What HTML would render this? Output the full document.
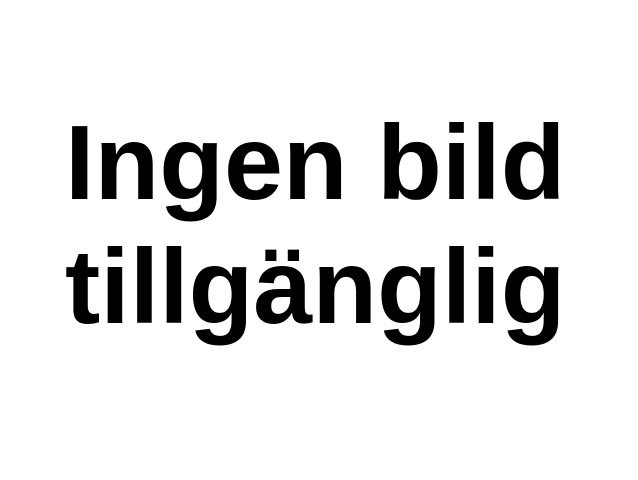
<!DOCTYPE html>
<html><head><meta charset="utf-8"><style>
html,body{margin:0;padding:0;background:#fff;width:638px;height:480px;overflow:hidden;position:relative}
.t{position:absolute;left:65px;font-family:"Liberation Sans",Arial,sans-serif;font-weight:bold;font-size:106px;line-height:106px;color:#000;white-space:nowrap}
</style></head><body>
<div class="t" style="top:110px">Ingen bild</div>
<div class="t" style="top:234px">tillgänglig</div>
</body></html>
